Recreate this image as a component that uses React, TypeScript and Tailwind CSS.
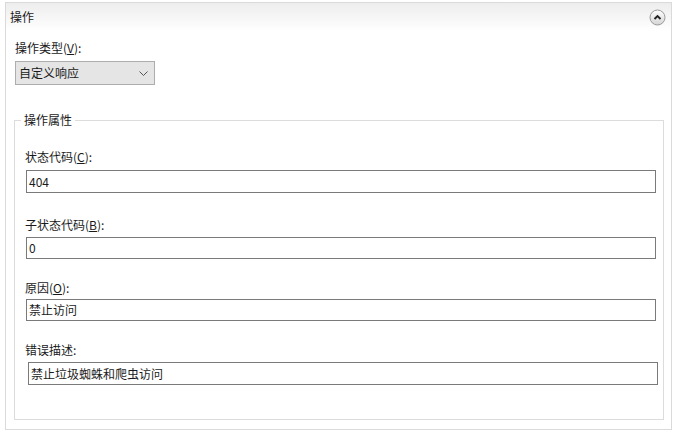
import React from 'react';

const FONT = '"Noto Sans CJK SC", "Microsoft YaHei", sans-serif';

function CollapseIcon() {
  return (
    <svg width="17" height="17" viewBox="0 0 17 17">
      <defs>
        <linearGradient id="cg" x1="0" y1="0" x2="0" y2="1">
          <stop offset="0" stopColor="#ffffff" />
          <stop offset="1" stopColor="#d4d4d4" />
        </linearGradient>
      </defs>
      <circle cx="8.5" cy="8.5" r="7.5" fill="url(#cg)" stroke="#999" strokeWidth="1" />
      <polyline points="5.5,10 8.5,7 11.5,10" fill="none" stroke="#222" strokeWidth="1.9" />
    </svg>
  );
}

function Chevron() {
  return (
    <svg width="9" height="5" viewBox="0 0 9 5">
      <polyline points="0.5,0.5 4.5,4.5 8.5,0.5" fill="none" stroke="#555" strokeWidth="1" />
    </svg>
  );
}

interface FieldProps {
  label: React.ReactNode;
  value: string;
  top: string;
  gap: string;
  box: string;
}

function Field({ label, value, top, gap, box }: FieldProps) {
  return (
    <div className={top}>
      <div className="h-[16px] leading-[16px] pl-[10px]">{label}</div>
      <div className={`${gap} ${box} border border-[#7a7a7a] bg-white flex items-center pl-[2px] leading-[16px]`}>
        {value}
      </div>
    </div>
  );
}

export default function App() {
  return (
    <div
      className="w-[678px] h-[432px] bg-white pt-[2px] pl-[5px] text-[12px] text-[#1a1a1a] overflow-hidden"
      style={{ fontFamily: FONT }}
    >
      <div className="w-[667px] h-[428px] border border-[#dadada] flex flex-col">
        {/* header */}
        <div className="h-[28px] bg-gradient-to-b from-[#ededed] to-white flex items-center justify-between pl-[4px] pr-[5px]">
          <span className="leading-[16px]">操作</span>
          <CollapseIcon />
        </div>

        {/* body */}
        <div className="pl-[9px] pr-[7px]">
          <div className="mt-[9px] h-[16px] leading-[16px]">
            操作类型(<u>V</u>):
          </div>
          <div className="mt-[5px] w-[140px] h-[24px] bg-[#e5e5e5] border border-[#adadad] flex items-center justify-between pl-[3px] pr-[6px]">
            <span className="leading-[16px]">自定义响应</span>
            <Chevron />
          </div>

          {/* group box */}
          <div className="relative mt-[35px] -ml-[1px] w-[650px] h-[300px] border border-[#dcdcdc]">
            <span className="absolute -top-[9px] left-[6px] bg-white px-[3px] leading-[16px]">操作属性</span>
            <Field
              label={<>状态代码(<u>C</u>):</>}
              value="404"
              top="pt-[28px]"
              gap="mt-[5px]"
              box="ml-[11px] w-[630px] h-[23px]"
            />
            <Field
              label={<>子状态代码(<u>B</u>):</>}
              value="0"
              top="mt-[24px]"
              gap="mt-[4px]"
              box="ml-[11px] w-[630px] h-[22px]"
            />
            <Field
              label={<>原因(<u>O</u>):</>}
              value="禁止访问"
              top="mt-[21px]"
              gap="mt-[3px]"
              box="ml-[11px] w-[630px] h-[22px]"
            />
            <Field
              label="错误描述:"
              value="禁止垃圾蜘蛛和爬虫访问"
              top="mt-[21px]"
              gap="mt-[4px]"
              box="ml-[13px] w-[630px] h-[23px]"
            />
          </div>
        </div>
      </div>
    </div>
  );
}
